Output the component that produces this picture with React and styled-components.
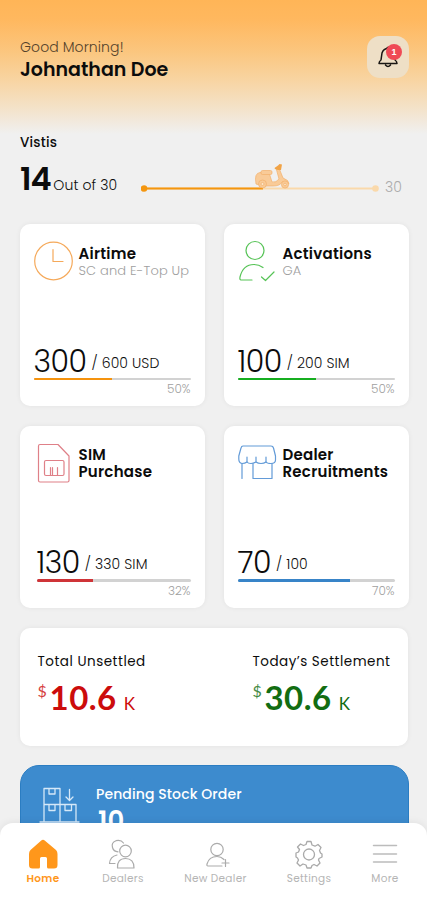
import React from "react";
import styled, { createGlobalStyle } from "styled-components";

const GlobalStyle = createGlobalStyle`
  * {
    box-sizing: border-box;
  }
  body {
    margin: 0;
    background: #f0f0f0;
    font-family: Poppins, Inter, "Open Sans", sans-serif;
    color: #0c0c0c;
  }
`;

const Screen = styled.div`
  width: 427px;
  height: 900px;
  display: flex;
  flex-direction: column;
  overflow: hidden;
  background: #f0f0f0;
`;
const Content = styled.main`
  height: 835px;
  flex-shrink: 0;
  overflow: hidden;
`;
const Header = styled.header`
  height: 134px;
  padding: 36px 18px 0 20px;
  display: flex;
  justify-content: space-between;
  align-items: flex-start;
  background: linear-gradient(
    #ffb557 0,
    #ffb85f 20px,
    #fbc67f 52px,
    #f8d4a2 80px,
    #f4e1c6 106px,
    #f0f0f0 134px
  );
`;
const Text = styled.div`
  font-size: ${(p) => p.$size}px;
  line-height: ${(p) => p.$line}px;
  font-weight: ${(p) => p.$weight || 400};
  letter-spacing: ${(p) => p.$track || 0}px;
  color: ${(p) => p.$color || "inherit"};
  white-space: nowrap;
`;
const BellButton = styled.button`
  position: relative;
  width: 42px;
  height: 42px;
  padding: 0;
  border: 0;
  border-radius: 13px;
  background: #eedfc6;
  display: flex;
  align-items: center;
  justify-content: center;
`;
const Badge = styled.span`
  position: absolute;
  top: 8px;
  right: 7px;
  width: 16px;
  height: 16px;
  border-radius: 50%;
  background: #ef4a55;
  color: #fff;
  font-size: 9px;
  line-height: 16px;
  font-weight: 700;
  text-align: center;
`;
const Visits = styled.section`
  height: 90px;
  padding: 0 25px 0 20px;
`;
const VisitsRow = styled.div`
  display: flex;
  align-items: flex-end;
  margin-top: 9px;
  height: 39px;
`;
const Count = styled.div`
  width: 121px;
  display: flex;
  align-items: baseline;
  gap: 3px;
`;
const Track = styled.div`
  width: 238px;
  height: 34px;
  margin-bottom: 5px;
  svg {
    display: block;
  }
`;
const TrackEnd = styled(Text)`
  margin-left: 6px;
`;
const Grid = styled.div`
  display: grid;
  grid-template-columns: 185px 185px;
  grid-template-rows: 182px 182px;
  gap: 19.5px 19px;
  padding: 0 19px 0 19.5px;
`;
const Panel = styled.section`
  background: #fff;
  border-radius: 10px;
  box-shadow: 0 0 5px rgba(0, 0, 0, 0.06);
`;
const Card = styled(Panel)`
  display: flex;
  flex-direction: column;
  justify-content: space-between;
  padding: 16px 14px 10px ${(p) => p.$left}px;
`;
const CardHead = styled.div`
  display: flex;
  margin-left: ${(p) => p.$shift}px;
`;
const IconBox = styled.div`
  width: 45px;
  height: 46px;
  flex-shrink: 0;
  svg {
    display: block;
  }
`;
const Titles = styled.div`
  padding-top: ${(p) => p.$top}px;
`;
const Amount = styled.div`
  display: flex;
  align-items: flex-end;
  gap: 5px;
  height: 33px;
`;
const Goal = styled(Text)`
  padding-bottom: 5px;
`;
const Bar = styled.div`
  height: 2.5px;
  border-radius: 2px;
  background: #d2d2d2;
  overflow: hidden;
`;
const Fill = styled.div`
  height: 100%;
  background: ${(p) => p.$color};
`;
const Percent = styled(Text)`
  text-align: right;
  margin-top: 1px;
`;
const Settlement = styled(Panel)`
  height: 118px;
  margin: 20px 19px 0 19.5px;
  padding: 24px 17.5px 0 18px;
  display: flex;
  justify-content: space-between;
`;
const Money = styled.div`
  display: flex;
  align-items: baseline;
  margin-top: 6px;
  font-family: Lato, sans-serif;
  color: ${(p) => p.$color};
`;
const Dollar = styled(Text)`
  align-self: flex-start;
  width: 12px;
  padding-top: 3px;
  opacity: 0.8;
`;
const Unit = styled(Text)`
  margin-left: 7px;
`;
const Order = styled.section`
  height: 120px;
  margin: 19.5px 18.5px 0 19.5px;
  padding: 19px 18px 0;
  border: 1px solid #2b7dc2;
  border-radius: 19px;
  background: #3d8bce;
  color: #fff;
  display: flex;
`;
const OrderText = styled.div`
  margin-left: 16.5px;
`;
const OrderCount = styled(Text)`
  padding-left: 2px;
`;
const TabBar = styled.nav`
  position: relative;
  flex-shrink: 0;
  height: 77px;
  margin-top: -12px;
  padding-top: 15px;
  border-radius: 13px 13px 0 0;
  background: #fff;
  box-shadow: 0 0 8px rgba(0, 0, 0, 0.08);
  display: grid;
  grid-template-columns: 86px 74px 111px 76px 76px;
`;
const Tab = styled.div`
  display: flex;
  flex-direction: column;
  align-items: center;
  svg {
    display: block;
    height: 32px;
    width: 32px;
  }
`;

const stroke = (color, width = 1.2) => ({
  fill: "none",
  stroke: color,
  strokeWidth: width,
  strokeLinecap: "round",
  strokeLinejoin: "round",
});

const ClockIcon = () => (
  <svg width="41" height="44" {...stroke("#f5a95a")}>
    <circle cx="19.500" cy="21" r="18.800" />
    <path d="M19 9.500V21.500H29" />
  </svg>
);
const UserCheckIcon = () => (
  <svg width="41" height="44" {...stroke("#56c356")}>
    <circle cx="17" cy="10.500" r="9" />
    <path d="M14 40H3Q1.500 40 2 37Q5 24.500 16 24.500Q21 24.500 25 27.500M23.500 37L27.500 40.500L36 32" />
  </svg>
);
const SimIcon = () => (
  <svg width="41" height="44" {...stroke("#df8088")}>
    <path d="M6 2.500H24L35 14V38.500Q35 40 33.500 40H6Q4.500 40 4.500 38.500V4Q4.500 2.500 6 2.500Z" />
    <rect x="10.500" y="18.500" width="19.500" height="15" rx="1.500" />
    <path d="M16.500 25.500V33.500M18.500 25.500V33.500M23.500 25.500V33.500" />
  </svg>
);
const StoreIcon = () => (
  <svg width="41" height="44" {...stroke("#639bd8")}>
    <path d="M5 4H33Q35 4 35.500 6L37.500 14V18Q37.500 21.500 33 21.500Q29 21.500 28 20Q26 21.500 23 21.500Q20 21.500 18 20Q15 21.500 13 21.500Q10 21.500 9 20Q7 21.500 4 21.500Q.8 21 .8 17V14L3 6Q3.500 4 5 4Z" />
    <path d="M9 15V20M18 15V20M28 15V20M4 21.500V36.500M15 21.500V36.500H34V21.500" />
  </svg>
);
const BoxesIcon = () => (
  <svg width="41" height="44" {...stroke("#d5e8f8", 1.3)}>
    <path d="M5 3.500H21V19.500H5ZM5 19.500V36M5 19.500H37V36M21 19.500V36M1 37H40M10 3.500V9H16V3.500M10 19.500V25.500H16V19.500M26 19.500V25.500H32.500V19.500M30.500 4.500V14.500M27 12L30.500 15.500L34 12" />
  </svg>
);
const BellIcon = () => (
  <svg width="24" height="26" {...stroke("#191613", 1.5)}>
    <path d="M12 4.500Q7.500 4.500 6 9L5 16Q3 17.500 3 19.500H21Q21 17.500 19 16L18 9Q16.500 4.500 12 4.500ZM11 4L13 3M9.500 21Q12 24 14.500 21" />
  </svg>
);

const RouteTrack = () => (
  <svg width="240" height="34">
    <path d="M3 28.500H235" stroke="#fad9ab" strokeWidth="2" />
    <path d="M3 28.500H122" stroke="#f4960f" strokeWidth="2" />
    <circle cx="3" cy="28.500" r="3.300" fill="#f4960f" />
    <circle cx="234.500" cy="28.500" r="3.300" fill="#fad9ab" />
    <g fill="#f9cb98" stroke="#f2b06c" strokeWidth=".7" strokeLinejoin="round">
      <path d="M115 24Q113 13 119 12.500H128L131 22Q135 23 138 19L135 8L138 8L142 18Q148 20 148 24L141 22Q139 26 132 26H122Z" />
      <rect x="120" y="10.500" width="11" height="4" rx="1.500" />
      <circle cx="121.500" cy="24" r="4" />
      <circle cx="144" cy="24.500" r="3.600" />
      <circle cx="121.500" cy="24" r="1.500" fill="#fbe4c8" />
      <circle cx="144" cy="24.500" r="1.300" fill="#fbe4c8" />
    </g>
    <path d="M133.500 8L137 5.500L138.500 4L141 4.500L140 10L137 10L134 9Z" fill="#f1a346" />
  </svg>
);

const HomeIcon = () => (
  <svg viewBox="0 0 32 32">
    <path
      d="M14 2.700Q16 1 18 2.700L29 12Q30.500 13.500 30.500 16V27Q30.500 30.500 27 30.500H21.500Q20 30.500 20 29V20.500Q20 19 18.500 19H14.500Q13 19 13 20.500V29Q13 30.500 11.500 30.500H5.500Q2 30.500 2 27V16Q2 13.500 3.500 12Z"
      fill="#ff971b"
    />
  </svg>
);
const DealersIcon = () => (
  <svg viewBox="0 0 32 32" {...stroke("#ababab")}>
    <circle cx="18.500" cy="13" r="5.800" />
    <path d="M10.500 30Q10 20.500 18.500 20.500Q27 20.500 27 30ZM16.500 5Q14 1.500 9 2.700Q4 4.500 5.500 9.500Q6.500 13.500 11 13.800M10 17Q3 18.500 2.500 25.500H8" />
  </svg>
);
const NewDealerIcon = () => (
  <svg viewBox="0 0 32 32" {...stroke("#ababab")}>
    <circle cx="17" cy="11.500" r="6.200" />
    <path d="M22 28H8Q6.500 28 7 26Q9 18.500 17 18.500Q21 18.500 24 21.500M25.500 21.500V28.500M22 25H29" />
  </svg>
);
const SettingsIcon = () => (
  <svg viewBox="0 0 32 32" {...stroke("#a9a9a9", 1.3)}>
    <circle cx="16" cy="16.500" r="5.500" />
    <path d="M14 3.500H18L19 7L22 8.200L25 6.500L28 9.500L26.500 12.500L27.500 15L29 16V19L26 20.500L25.500 22L27 25L24 28L21 26.500L19 27.500L18 30H14L13 27L10 26L7 28L4 25L5.500 22L4.500 20L3 19V15L5.500 14L6.500 11.500L4.500 9L7.500 6L10.500 7.500L13 6.500Z" />
  </svg>
);
const MoreIcon = () => (
  <svg viewBox="0 0 32 32" {...stroke("#bcbcbc", 1.5)}>
    <path d="M4.500 7.500H27.500M4.500 16H27.500M4.500 24H27.500" />
  </svg>
);

const cards = [
  { title: ["Airtime"], sub: "SC and E-Top Up", icon: <ClockIcon />, value: "300", total: "/ 600 USD", percent: 50, color: "#f5930e", left: 14 },
  { title: ["Activations"], sub: "GA", icon: <UserCheckIcon />, value: "100", total: "/ 200 SIM", percent: 50, color: "#16ae20", left: 14 },
  { title: ["SIM", "Purchase"], icon: <SimIcon />, value: "130", total: "/ 330 SIM", percent: 32, fill: 37, color: "#cf3438", left: 17 },
  { title: ["Dealer", "Recruitments"], icon: <StoreIcon />, value: "70", total: "/ 100", percent: 70, fill: 71.5, color: "#3884c8", left: 14 },
];

const tabs = [
  { label: "Home", icon: <HomeIcon />, active: true },
  { label: "Dealers", icon: <DealersIcon /> },
  { label: "New Dealer", icon: <NewDealerIcon /> },
  { label: "Settings", icon: <SettingsIcon /> },
  { label: "More", icon: <MoreIcon /> },
];

const StatCard = ({ card }) => (
  <Card $left={card.left}>
    <CardHead $shift={14 - card.left}>
      <IconBox>{card.icon}</IconBox>
      <Titles $top={card.sub ? 5 : 4}>
        {card.title.map((line) => (
          <Text key={line} $size={15} $line={17} $weight={600} $track={0.25}>
            {line}
          </Text>
        ))}
        {card.sub && (
          <Text $size={13} $line={18} $weight={300} $color="#a0a0a0" $track={0.15}>
            {card.sub}
          </Text>
        )}
      </Titles>
    </CardHead>
    <div>
      <Amount>
        <Text $size={30} $line={33} $weight={300} $track={-0.5}>
          {card.value}
        </Text>
        <Goal $size={14} $line={20} $weight={300} $track={0.1}>
          {card.total}
        </Goal>
      </Amount>
      <Bar>
        <Fill $color={card.color} style={{ width: `${card.fill || card.percent}%` }} />
      </Bar>
      <Percent $size={12} $line={15} $weight={300} $color="#a0a0a0">
        {card.percent}%
      </Percent>
    </div>
  </Card>
);

const Total = ({ label, amount, color }) => (
  <div>
    <Text $size={13.5} $line={20} $weight={400} $track={0.5}>
      {label}
    </Text>
    <Money $color={color}>
      <Dollar $size={16} $line={20}>
        $
      </Dollar>
      <Text $size={33} $line={38} $weight={700} $track={0.5}>
        {amount}
      </Text>
      <Unit $size={17} $line={20}>
        K
      </Unit>
    </Money>
  </div>
);

export default function App() {
  return (
    <Screen>
      <GlobalStyle />
      <Content>
        <Header>
          <div>
            <Text $size={14} $line={22} $weight={300} $color="#54422b" $track={0.1}>
              Good Morning!
            </Text>
            <Text $size={19} $line={24} $weight={600}>
              Johnathan Doe
            </Text>
          </div>
          <BellButton>
            <BellIcon />
            <Badge>1</Badge>
          </BellButton>
        </Header>
        <Visits>
          <Text $size={13.5} $line={17} $weight={500} $track={0.2}>
            Vistis
          </Text>
          <VisitsRow>
            <Count>
              <Text $size={32} $line={40} $weight={600} $track={-1.2}>
                14
              </Text>
              <Text $size={14} $line={20} $weight={300} $track={0.1}>
                Out of 30
              </Text>
            </Count>
            <Track>
              <RouteTrack />
            </Track>
            <TrackEnd $size={14} $line={24} $weight={300} $color="#aaa">
              30
            </TrackEnd>
          </VisitsRow>
        </Visits>
        <Grid>
          {cards.map((card) => (
            <StatCard key={card.title[0]} card={card} />
          ))}
        </Grid>
        <Settlement>
          <Total label="Total Unsettled" amount="10.6" color="#cc0c0c" />
          <Total label="Today’s Settlement" amount="30.6" color="#126d12" />
        </Settlement>
        <Order>
          <BoxesIcon />
          <OrderText>
            <Text $size={14} $line={18} $weight={500} $track={0.1}>
              Pending Stock Order
            </Text>
            <OrderCount $size={26} $line={36} $weight={600}>
              10
            </OrderCount>
          </OrderText>
        </Order>
      </Content>
      <TabBar>
        {tabs.map((tab) => (
          <Tab key={tab.label}>
            {tab.icon}
            <Text $size={10.5} $line={18} $weight={tab.active ? 600 : 400} $color={tab.active ? "#ff971b" : "#b5b5b5"} $track={0.3}>
              {tab.label}
            </Text>
          </Tab>
        ))}
      </TabBar>
    </Screen>
  );
}
